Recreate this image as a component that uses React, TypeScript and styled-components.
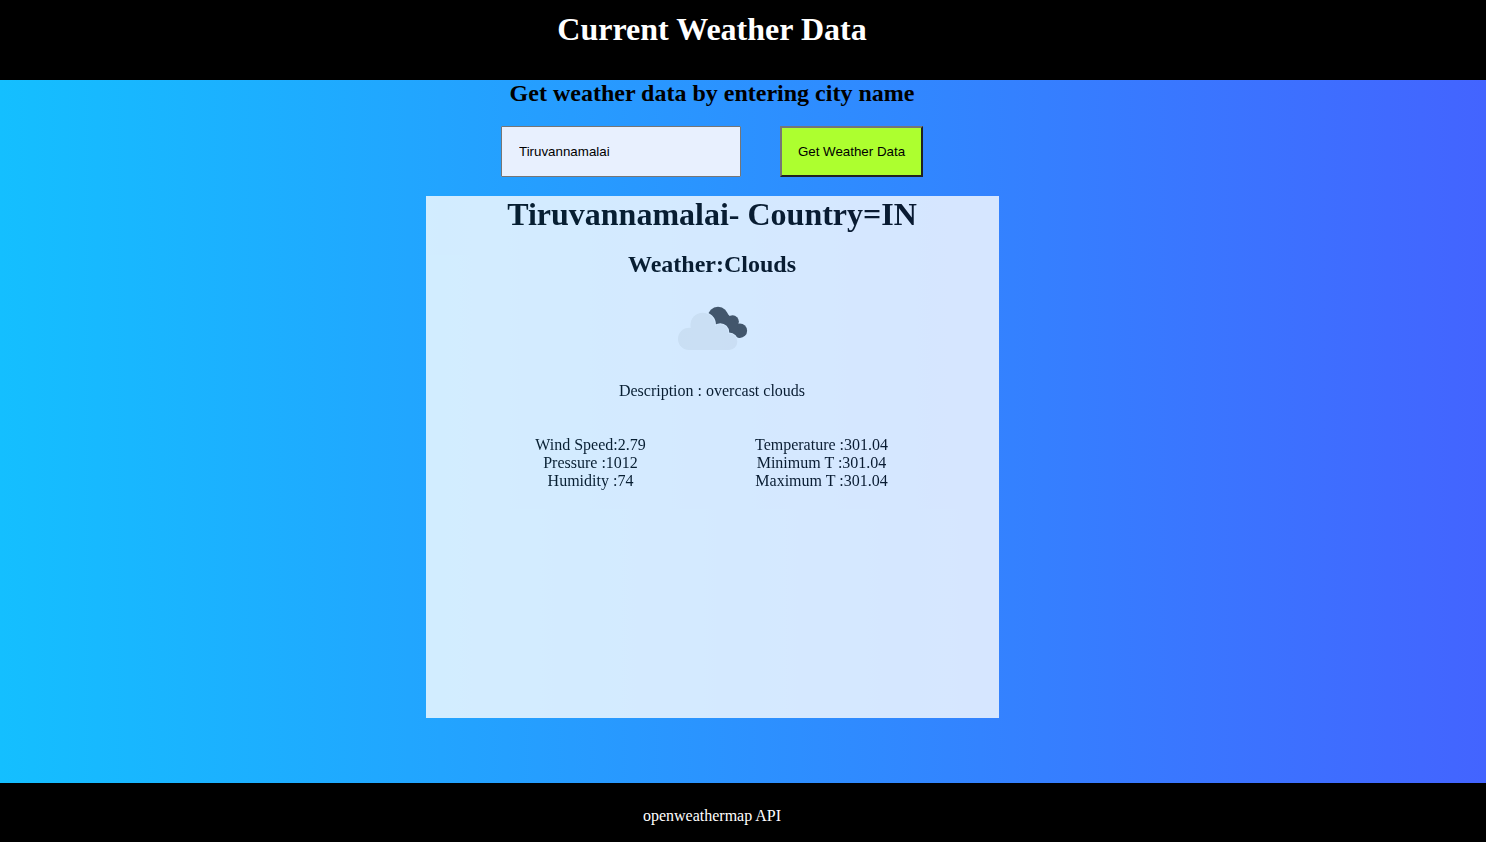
import React from 'react';
import styled, { createGlobalStyle } from 'styled-components';

const GlobalStyle = createGlobalStyle`
  * { box-sizing: border-box; }
  body { margin: 0; font-family: "Liberation Serif", "Times New Roman", serif; font-size: 16px; overflow: hidden; }
`;
const Page = styled.div`
  height: 842px;
  display: flex;
  flex-direction: column;
  background: linear-gradient(to right, #14bfff, #4364ff);
`;
const Header = styled.header`
  height: 80px;
  flex: none;
  background: #000;
  color: #fff;
  text-align: center;
  padding: 11px 62px 0 0;
`;
const Title = styled.h1`
  margin: 0;
  font-size: 32px;
  line-height: 37px;
`;
const Main = styled.main`
  flex: 1;
  display: flex;
  flex-direction: column;
  align-items: center;
  padding-right: 62px;
`;
const Subtitle = styled.h2`
  margin: 0;
  font-size: 24px;
  line-height: 27px;
`;
const Form = styled.form`
  display: flex;
  gap: 39px;
  margin: 19px 0;
  height: 51px;
`;
const CityInput = styled.input`
  width: 240px;
  height: 51px;
  border: 1px solid #767676;
  border-radius: 1px;
  padding: 1px 17px;
  background: #e8f0fe;
  color: #000;
  font: 13.333px "Liberation Sans", Arial, sans-serif;
  outline: none;
`;
const Submit = styled.button`
  width: 143px;
  height: 51px;
  padding: 0;
  border: 2px solid;
  border-color: #767676 #212121 #212121 #767676;
  background: greenyellow;
  color: #000;
  font: 13.333px "Liberation Sans", Arial, sans-serif;
`;
const Card = styled.section`
  width: 573px;
  height: 522px;
  background: #fff;
  opacity: 0.8;
  display: flex;
  flex-direction: column;
  align-items: center;
`;
const City = styled.h1`
  margin: 0;
  font-size: 32px;
  line-height: 37px;
`;
const Condition = styled.h2`
  margin: 18px 0 0;
  font-size: 24px;
  line-height: 27px;
`;
const Clouds = styled.svg`
  width: 100px;
  height: 100px;
  margin-top: 4px;
`;
const Description = styled.p`
  margin: 0;
  line-height: 18px;
`;
const Details = styled.div`
  display: grid;
  grid-template-columns: 231px 231px;
  margin: 36px 12px 0 0;
  line-height: 18px;
  text-align: center;
`;
const Footer = styled.footer`
  height: 59px;
  flex: none;
  background: #000;
  color: #fff;
  text-align: center;
  padding: 24px 62px 0 0;
  line-height: 18px;
`;

const FrontCloud = () => (
  <>
    <circle cx="27.2" cy="56.9" r="11.2" />
    <circle cx="40.7" cy="43" r="12.3" />
    <circle cx="58.2" cy="50.2" r="8" />
    <circle cx="67.1" cy="59.8" r="8.2" />
    <path d="M27 68V48L40 40L58 48L67 58V68Z" />
  </>
);

export default function App() {
  return (
    <Page>
      <GlobalStyle />
      <Header><Title>Current Weather Data</Title></Header>
      <Main>
        <Subtitle>Get weather data by entering city name</Subtitle>
        <Form onSubmit={(e) => e.preventDefault()}>
          <CityInput defaultValue="Tiruvannamalai" />
          <Submit>Get Weather Data</Submit>
        </Form>
        <Card>
          <City>Tiruvannamalai- Country=IN</City>
          <Condition>Weather:Clouds</Condition>
          <Clouds viewBox="0 0 100 100" aria-label="Clouds">
            <mask id="front-gap" maskUnits="userSpaceOnUse" x="0" y="0" width="100" height="100">
              <rect width="100" height="100" fill="#fff" />
              <g fill="#000" stroke="#000" strokeWidth="2"><FrontCloud /></g>
            </mask>
            <g fill="#484848" mask="url(#front-gap)">
              <circle cx="56" cy="35" r="10.2" />
              <circle cx="70.6" cy="39.6" r="6.3" />
              <circle cx="77.8" cy="48.7" r="7.3" />
              <path d="M46 32L64 30L75 42L78 56L65 52L53 45Z" />
            </g>
            <g fill="#f2f2f2"><FrontCloud /></g>
          </Clouds>
          <Description>Description : overcast clouds</Description>
          <Details>
            <div>Wind Speed:2.79<br />Pressure :1012<br />Humidity :74</div>
            <div>Temperature :301.04<br />Minimum T :301.04<br />Maximum T :301.04</div>
          </Details>
        </Card>
      </Main>
      <Footer>openweathermap API</Footer>
    </Page>
  );
}
